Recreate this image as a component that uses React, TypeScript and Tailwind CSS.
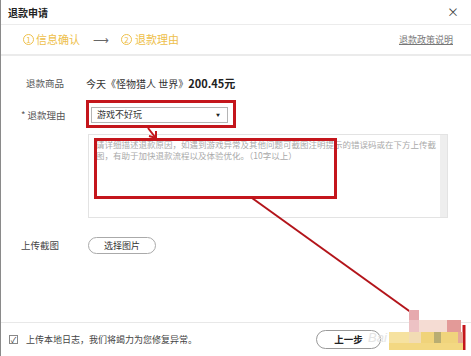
import React from "react";

const font = { fontFamily: '"Noto Sans CJK SC", "Noto Sans", sans-serif' };

// pixelated blur block in the bottom-right corner of the screenshot
const mosaic: [number, number, number, number, string][] = [
  [408, 310, 10, 10, "#e6a9ae"],
  [408, 320, 10, 12, "#edc2c4"],
  [418, 320, 28, 12, "#f5dcd3"],
  [446, 320, 14, 12, "#e39a98"],
  [388, 332, 20, 11, "#f6e2a0"],
  [408, 332, 12, 11, "#f2dcb4"],
  [420, 332, 13, 11, "#f0d37a"],
  [433, 332, 7, 11, "#b9ad72"],
  [440, 332, 17, 11, "#f0d47c"],
  [457, 332, 5, 11, "#e6a898"],
  [388, 343, 74, 7, "#f3d882"],
];

export default function App() {
  return (
    <div
      className="relative w-[471px] h-[356px] bg-white border-l border-[#8a8a8a] overflow-hidden flex flex-col text-[#333]"
      style={font}
    >
      {/* title */}
      <div className="h-[25px] flex items-center justify-between pl-[7px] pr-[12px] border-b border-[#ececec]">
        <span className="text-[10px] font-bold text-[#222]">退款申请</span>
        <span className="text-[12px] text-[#444] leading-none">×</span>
      </div>

      {/* steps */}
      <div className="h-[31px] flex items-center pl-[22px] pr-[18px] border-b-2 border-[#ebebeb] text-[#eec04a]">
        <span className="w-[11px] h-[11px] rounded-full border border-[#eec04a] text-[8px] leading-none flex items-center justify-center">1</span>
        <span className="ml-[2px] text-[11px]">信息确认</span>
        <span className="ml-[13px] text-[11px] text-[#666]">⟶</span>
        <span className="ml-[12px] w-[11px] h-[11px] rounded-full border border-[#eec04a] text-[8px] leading-none flex items-center justify-center">2</span>
        <span className="ml-[3px] text-[11px]">退款理由</span>
        <span className="ml-auto text-[9px] text-[#777] underline">退款政策说明</span>
      </div>

      {/* form */}
      <div className="flex flex-col pl-[20px] pt-[19px]">
        <div className="flex items-center h-[16px]">
          <span className="w-[65px] pl-[5px] text-[9.5px] text-[#555]">退款商品</span>
          <span className="text-[10px] text-[#333]">今天《怪物猎人 世界》</span>
          <span className="text-[11px] font-bold text-[#222]">200.45元</span>
        </div>

        <div className="flex items-center mt-[16px] h-[16px]">
          <span className="w-[70px] text-[9.5px] text-[#555]">* 退款理由</span>
          <div className="w-[137px] h-[16px] border border-[#b5b5b5] flex items-center justify-between pl-[5px] pr-[7px]">
            <span className="text-[9px] text-[#333]">游戏不好玩</span>
            <span className="text-[4px] text-[#222]">▼</span>
          </div>
        </div>

        <div className="ml-[67px] mt-[11px] w-[360px] h-[84px] border border-[#e3e3e3] flex">
          <div className="flex-1 pl-[7px] pt-[4px] text-[8.5px] leading-[11px] text-[#aaa]">
            <div className="whitespace-nowrap">请详细描述退款原因，如遇到游戏异常及其他问题可截图注明提示的错误码或在下方上传截</div>
            <div className="whitespace-nowrap">图，有助于加快退款流程以及体验优化。（10字以上）</div>
          </div>
          <div className="w-[7px] bg-[#eeeeee]"></div>
        </div>

        <div className="flex items-center mt-[19px]">
          <span className="w-[67px] text-[9.5px] text-[#444]">上传截图</span>
          <div className="w-[68px] h-[17px] rounded-full border border-[#aaa] flex items-center justify-center text-[9px] text-[#333]">
            选择图片
          </div>
        </div>
      </div>

      {/* footer */}
      <div className="mt-auto h-[34px] border-t border-[#e8e8e8] flex items-center pl-[8px]">
        <span className="w-[9px] h-[9px] border border-[#888] flex items-center justify-center text-[8px] leading-none text-[#333]">✓</span>
        <span className="ml-[8px] text-[9px] text-[#444]">上传本地日志，我们将竭力为您修复异常。</span>
        <div className="ml-auto mr-[90px] w-[65px] h-[19px] rounded-full border border-[#999] flex items-center justify-center text-[9.5px] font-bold text-[#222]">
          上一步
        </div>
      </div>

      {/* annotations */}
      <div className="absolute left-[85px] top-[100px] w-[150px] h-[28px] border-[3px] border-[#c4161c]"></div>
      <div className="absolute left-[93px] top-[138px] w-[243px] h-[61px] border-[3px] border-[#c4161c]"></div>
      <svg className="absolute left-0 top-0" width="471" height="356">
        <line x1="147" y1="128" x2="154" y2="137" stroke="#c4161c" strokeWidth="2" />
        <polyline points="148,136 155,138 155,131" fill="none" stroke="#c4161c" strokeWidth="2" />
        <line x1="251" y1="198" x2="411" y2="313" stroke="#b3141a" strokeWidth="2" />
        <line x1="463" y1="325" x2="463" y2="350" stroke="#c4161c" strokeWidth="3" />
      </svg>
      {mosaic.map(([x, y, w, h, c], i) => (
        <div
          key={i}
          className="absolute"
          style={{ left: x, top: y, width: w, height: h, background: c }}
        ></div>
      ))}
      <span className="absolute left-[367px] top-[328px] text-[13px] italic text-[#e4e4e4]" style={{ fontFamily: '"Liberation Sans", sans-serif' }}>
        Bai
      </span>
    </div>
  );
}
